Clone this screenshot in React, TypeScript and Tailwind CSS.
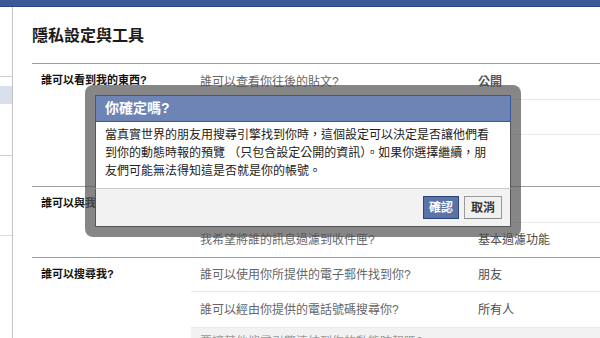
const font = { fontFamily: '"Liberation Sans", "Noto Sans CJK TC", sans-serif' }

type Row = { id: string; q?: string; v?: string; bold?: boolean; h: string; last?: boolean }

// rows behind the dialog are kept empty: they can't be seen
const sections: { title: string; rows: Row[] }[] = [
  {
    title: "誰可以看到我的東西?",
    rows: [
      { id: "a1", q: "誰可以查看你往後的貼文?", v: "公開", bold: true, h: "h-[36px]" },
      { id: "a2", h: "h-[35px]" },
      { id: "a3", h: "h-[51px]", last: true },
    ],
  },
  {
    title: "誰可以與我聯絡?",
    rows: [
      { id: "b1", h: "h-[36px]" },
      { id: "b2", q: "我希望將誰的訊息過濾到收件匣?", v: "基本過濾功能", h: "h-[34px]", last: true },
    ],
  },
  {
    title: "誰可以搜尋我?",
    rows: [
      { id: "c1", q: "誰可以使用你所提供的電子郵件找到你?", v: "朋友", h: "h-[34px]" },
      { id: "c2", q: "誰可以經由你提供的電話號碼搜尋你?", v: "所有人", h: "h-[36px]" },
    ],
  },
]

function Sidebar() {
  return (
    <div className="w-[13px] shrink-0 border-r border-[#c4c4c4] flex flex-col">
      <div className="h-[70px] border-b border-[#cfcfcf]" />
      <div className="h-[9px]" />
      <div className="h-[18px] bg-[#d8dfea]" />
      <div className="h-[52px] border-b border-[#cfcfcf]" />
      <div className="h-[80px] border-b border-[#dcdcdc]" />
    </div>
  )
}

function ConfirmDialog() {
  return (
    <div className="absolute left-[85px] top-[85px] w-[436px] h-[152px] rounded-[8px] bg-[rgba(82,82,82,0.7)] p-[10px]">
      <div className="flex flex-col h-full">
        <div className="h-[27px] shrink-0 flex items-center bg-[#6d84b4] border border-[#3b5998] pl-[9px] text-white text-[14px] font-bold">
          你確定嗎?
        </div>
        <div className="h-[66px] shrink-0 bg-white border-x border-[#555] pl-[9px] pt-[4px] text-[12px] leading-[18px] text-[#222] whitespace-nowrap">
          當真實世界的朋友用搜尋引擎找到你時，這個設定可以決定是否讓他們看
          <br />
          到你的動態時報的預覽 （只包含設定公開的資訊）。如果你選擇繼續，朋
          <br />
          友們可能無法得知這是否就是你的帳號。
        </div>
        <div className="flex-1 flex items-center justify-end gap-[5px] pr-[8px] bg-[#f2f2f2] border-x border-b border-[#555] border-t border-t-[#ccc]">
          <button
            type="button"
            className="h-[23px] w-[36px] bg-[#5b74a8] border border-[#29447e] text-white text-[12px] font-bold leading-none"
            style={font}
          >
            確認
          </button>
          <button
            type="button"
            className="h-[23px] w-[38px] bg-[#f0f0f0] border border-[#999] border-b-[#888] text-[#333] text-[12px] font-bold leading-none"
            style={font}
          >
            取消
          </button>
        </div>
      </div>
    </div>
  )
}

export default function App() {
  return (
    <div className="relative w-[600px] h-[338px] overflow-hidden bg-white" style={font}>
      <div className="h-[7px] bg-[#3b5998] border-b border-[#2d4486]" />
      <div className="flex">
        <Sidebar />
        <div className="flex-1 pl-[19px]">
          <div className="h-[56px] flex items-center pt-[2px] text-[16px] font-bold text-[#1c1c1c]">
            隱私設定與工具
          </div>
          {sections.map((s) => (
            <div key={s.title} className="flex border-t border-[#a0a0a0]">
              <div className="w-[159px] shrink-0 pl-[9px] pt-[9px] text-[11px] leading-[14px] font-bold text-[#111]">
                {s.title}
              </div>
              <div className="flex-1 flex flex-col">
                {s.rows.map((r) => (
                  <div
                    key={r.id}
                    className={`${r.h} flex items-center pl-[9px] text-[12px] ${r.last ? "" : "border-b border-[#e9e9e9]"}`}
                  >
                    <div className="w-[278px] shrink-0 text-[#666]">{r.q}</div>
                    <div className={r.bold ? "font-bold text-[#555]" : "text-[#4b4b4b]"}>{r.v}</div>
                  </div>
                ))}
              </div>
            </div>
          ))}
          <div className="flex">
            <div className="w-[159px] shrink-0" />
            <div className="flex-1 h-[40px] bg-[#f2f2f2] pl-[9px] pt-[7px] text-[12px] leading-[14px] text-[#999]">
              要讓其他搜尋引擎連結到你的動態時報嗎?
            </div>
          </div>
        </div>
      </div>
      <ConfirmDialog />
    </div>
  )
}
